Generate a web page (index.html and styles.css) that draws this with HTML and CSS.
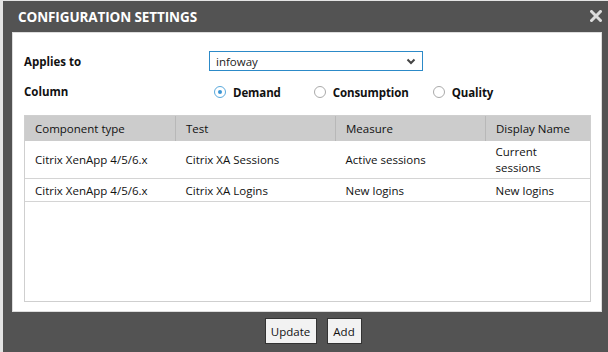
FILE: index.html
```html
<!DOCTYPE html>
<html>
<head>
<meta charset="utf-8">
<link rel="stylesheet" href="styles.css">
</head>
<body>
<div class="dialog">
  <div class="titlebar">
    <span class="title">CONFIGURATION SETTINGS</span>
    <svg class="close" width="12" height="12" viewBox="0 0 12 12"><path d="M1.5 1.5 L10.5 10.5 M10.5 1.5 L1.5 10.5" stroke="#dcdcdc" stroke-width="3" stroke-linecap="square"/></svg>
  </div>
  <div class="content">
    <div class="row applies">
      <span class="label">Applies to</span>
      <div class="select">
        <span>infoway</span>
        <svg class="chev" width="10" height="7" viewBox="0 0 10 7"><path d="M1.5 1.5 L5 5 L8.5 1.5" fill="none" stroke="#444" stroke-width="2"/></svg>
      </div>
    </div>
    <div class="row column">
      <span class="label">Column</span>
      <div class="radios">
        <span class="radio on"><i></i>Demand</span>
        <span class="radio"><i></i>Consumption</span>
        <span class="radio"><i></i>Quality</span>
      </div>
    </div>
    <div class="tablebox">
      <table>
        <thead>
          <tr><th class="c1">Component type</th><th class="c2">Test</th><th class="c3">Measure</th><th class="c4">Display Name</th></tr>
        </thead>
        <tbody>
          <tr class="r1"><td>Citrix XenApp 4/5/6.x</td><td>Citrix XA Sessions</td><td>Active sessions</td><td>Current sessions</td></tr>
          <tr class="r2"><td>Citrix XenApp 4/5/6.x</td><td>Citrix XA Logins</td><td>New logins</td><td>New logins</td></tr>
        </tbody>
      </table>
    </div>
  </div>
  <div class="buttons">
    <button class="btn">Update</button>
    <button class="btn add">Add</button>
  </div>
</div>
</body>
</html>
```
FILE: styles.css
```css
html, body { margin: 0; padding: 0; }
body {
  background: #e4e4e4;
  width: 608px;
  height: 352px;
  overflow: hidden;
  font-family: "Open Sans", "Noto Sans", sans-serif;
  color: #111;
}
.dialog {
  margin: 1px 0 0 3px;
  height: 351px;
  background: #535353;
  display: flex;
  flex-direction: column;
}
.titlebar {
  height: 31px;
  display: flex;
  align-items: center;
  justify-content: space-between;
  padding: 0 6px 0 15px;
}
.title {
  color: #fff;
  font-weight: bold;
  font-size: 13.5px;
  letter-spacing: -0.1px;
}
.close { display: block; margin-top: -2px; }
.content {
  background: #fff;
  margin: 0 6px 0 9px;
  height: 280px;
  padding: 18px 10px 0 11px;
  box-sizing: border-box;
  border: 1px solid #ddd;
}
.row {
  display: flex;
  align-items: center;
}
.label {
  width: 185px;
  font-size: 11.5px;
  font-weight: bold;
}
.applies { height: 20px; }
.select {
  width: 214px;
  height: 20px;
  box-sizing: border-box;
  border: 1px solid #2c8ac8;
  display: flex;
  align-items: center;
  justify-content: space-between;
  padding: 0 6px 0 6px;
  font-size: 11.5px;
  color: #222;
}
.column { margin-top: 10px; height: 20px; }
.radios { display: flex; align-items: center; margin-top: 2px; }
.radio {
  display: flex;
  align-items: center;
  font-size: 11.5px;
  font-weight: bold;
  margin-left: 5px;
  letter-spacing: -0.1px;
}
.radio:nth-child(2) { margin-left: 33px; }
.radio:nth-child(3) { margin-left: 24px; }
.radio i {
  width: 10px;
  height: 10px;
  border: 1px solid #aaa;
  border-radius: 50%;
  margin-right: 7px;
  box-sizing: content-box;
  position: relative;
}
.radio.on i { border-color: #5aa9dc; }
.radio.on i::after {
  content: "";
  position: absolute;
  left: 3px; top: 3px;
  width: 4px; height: 4px;
  border-radius: 50%;
  background: #3b95d4;
}
.tablebox {
  margin-top: 14px;
  height: 187px;
  border: 1px solid #cfcfcf;
  box-sizing: border-box;
}
table {
  width: 100%;
  border-collapse: collapse;
  font-size: 11.5px;
}
th {
  background: #cccccc;
  font-weight: normal;
  text-align: left;
  height: 25px;
  padding: 0 10px;
  border-left: 1px solid #b8b8b8;
}
th.c1 { border-left: none; width: 130px; }
th.c2 { width: 139px; }
th.c3 { width: 129px; }
td {
  padding: 0 10px;
  border-bottom: 1px solid #d4d4d4;
  vertical-align: middle;
}
.r1 td { height: 37px; line-height: 16px; }
.r2 td { height: 22px; }
.buttons {
  display: flex;
  justify-content: center;
  gap: 10px;
  padding: 6px 0 0 0;
  margin-left: 15px;
}
.btn {
  font-family: "Open Sans", "Noto Sans", sans-serif;
  font-size: 11.5px;
  background: #f2f2f2;
  border: 1px solid #333;
  height: 26px;
  width: 52px;
  padding: 0;
  color: #111;
}
.btn.add { width: 35px; }
```
